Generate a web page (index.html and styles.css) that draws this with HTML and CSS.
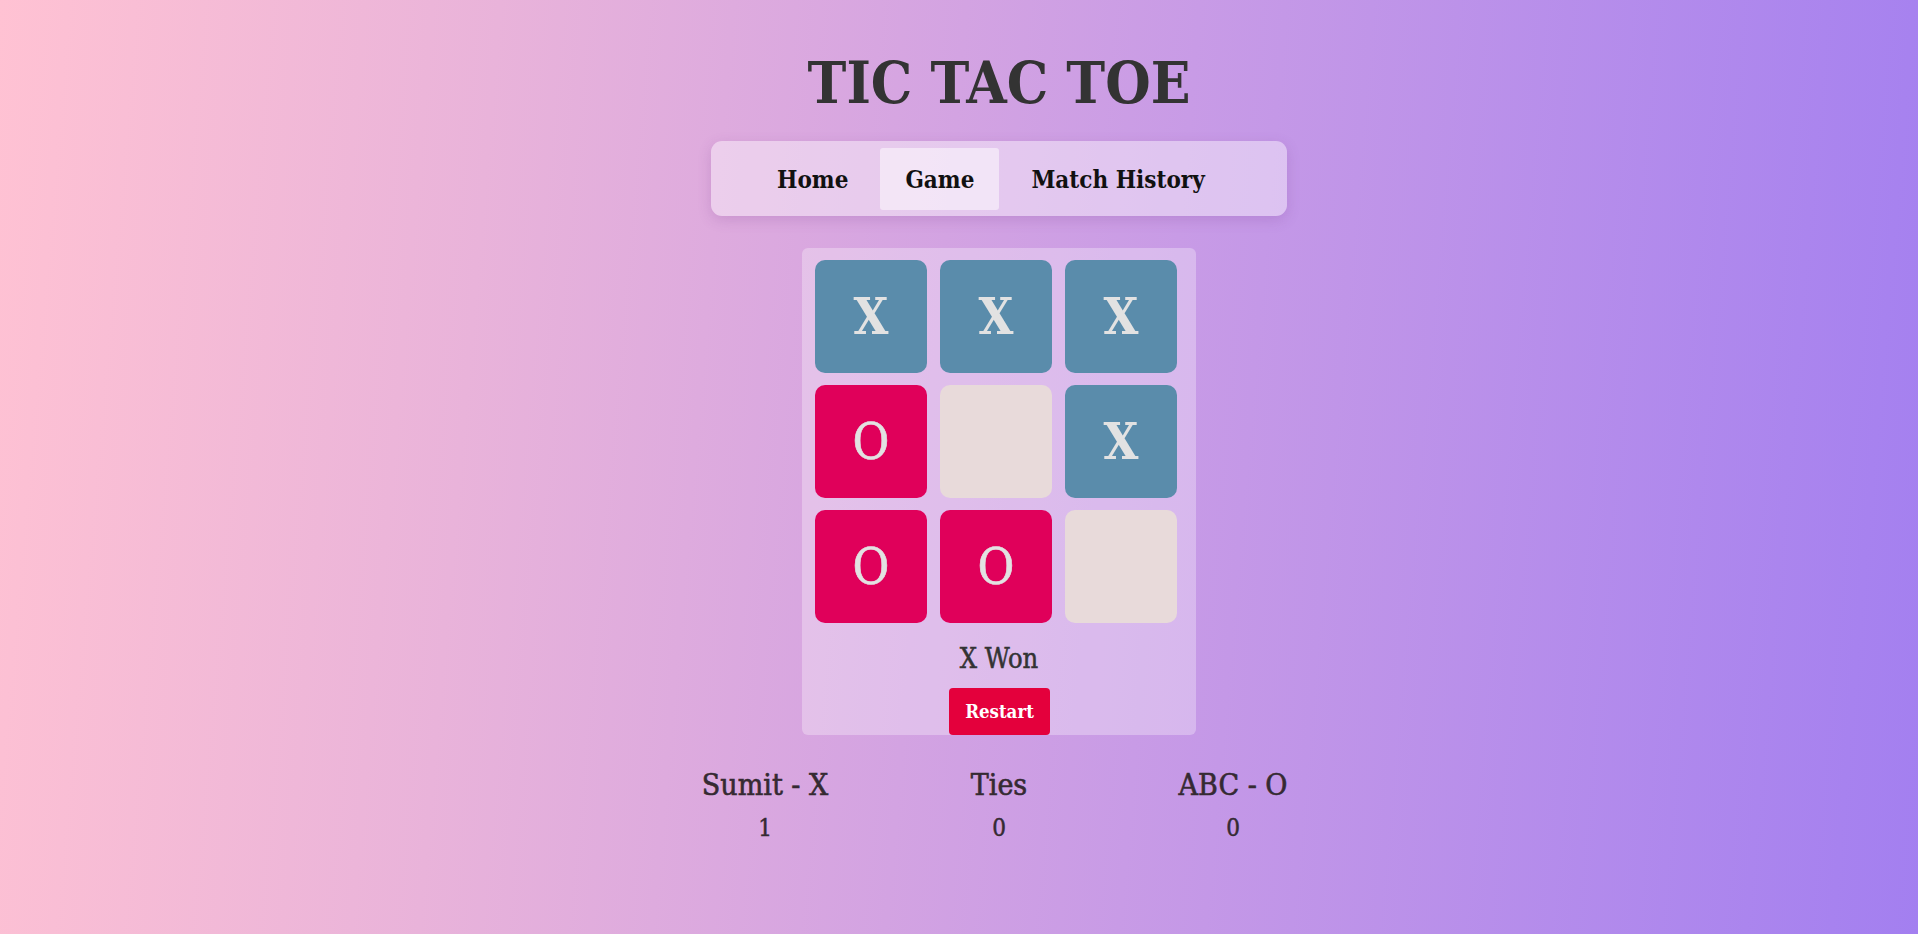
FILE: index.html
```html
<!DOCTYPE html>
<html lang="en">
<head>
<meta charset="utf-8">
<title>Tic Tac Toe</title>
<link rel="stylesheet" href="styles.css">
</head>
<body>
<div class="app">
  <h1 class="title">TIC TAC TOE</h1>
  <nav class="nav">
    <a class="nav-item">Home</a>
    <a class="nav-item active">Game</a>
    <a class="nav-item">Match History</a>
  </nav>
  <section class="board-wrap">
    <div class="board">
      <div class="cell x">X</div>
      <div class="cell x">X</div>
      <div class="cell x">X</div>
      <div class="cell o">O</div>
      <div class="cell empty"></div>
      <div class="cell x">X</div>
      <div class="cell o">O</div>
      <div class="cell o">O</div>
      <div class="cell empty"></div>
    </div>
    <div class="status">X Won</div>
    <button class="restart">Restart</button>
  </section>
  <section class="scores">
    <div class="score">
      <div class="score-name">Sumit - X</div>
      <div class="score-val">1</div>
    </div>
    <div class="score">
      <div class="score-name">Ties</div>
      <div class="score-val">0</div>
    </div>
    <div class="score">
      <div class="score-name">ABC - O</div>
      <div class="score-val">0</div>
    </div>
  </section>
</div>
</body>
</html>
```
FILE: styles.css
```css
* { box-sizing: border-box; }
html, body { margin: 0; padding: 0; height: 100%; }
body {
  background: linear-gradient(95deg, #ffc2d3 0%, #e9b3da 25%, #c89be6 60%, #a37ff0 100%);
  font-family: "DejaVu Serif Condensed", "DejaVu Serif", serif;
  color: #333;
}
.app {
  display: flex;
  flex-direction: column;
  align-items: center;
  padding-top: 47px;
  padding-left: 80px;
}
.title {
  margin: 0;
  font-size: 58px;
  font-weight: bold;
  line-height: 72px;
  color: #333;
}
.nav {
  margin-top: 22px;
  width: 576px;
  height: 75px;
  padding: 7px 0 6px 41px;
  display: flex;
  gap: 7px;
  background: rgba(255, 255, 255, 0.42);
  border-radius: 11px;
  box-shadow: 0 4px 14px rgba(120, 60, 140, 0.2);
}
.nav-item {
  display: flex;
  align-items: center;
  padding: 0 25px;
  font-size: 24px;
  font-weight: bold;
  color: #111;
  border-radius: 3px;
}
.nav-item.active { background: rgba(255, 255, 255, 0.5); }
.board-wrap {
  margin-top: 32px;
  width: 394px;
  height: 487px;
  padding: 12px 0 0 13px;
  background: rgba(255, 255, 255, 0.3);
  border-radius: 6px;
  display: flex;
  flex-direction: column;
}
.board {
  display: grid;
  grid-template-columns: repeat(3, 112px);
  grid-auto-rows: 113px;
  column-gap: 13px;
  row-gap: 12px;
}
.cell {
  border-radius: 10px;
  display: flex;
  align-items: center;
  justify-content: center;
  font-size: 50px;
  font-weight: bold;
  color: #e2e2e2;
}
.cell.x { background: #5a8cab; }
.cell.o { background: #e0005a; font-weight: normal; -webkit-text-stroke: 0.6px #e2e2e2; }
.cell.empty { background: #e8dada; }
.status {
  margin-top: 20px;
  width: 368px;
  text-align: center;
  font-size: 27px;
  line-height: 32px;
  color: #333;
  -webkit-text-stroke: 0.5px #333;
}
.restart {
  align-self: flex-start;
  margin: 13px 0 0 134px;
  width: 101px;
  height: 48px;
  border: 0;
  border-radius: 4px;
  background: #e4003c;
  color: #fff;
  font-family: inherit;
  font-size: 18.5px;
  font-weight: bold;
}
.scores {
  margin-top: 32px;
  display: grid;
  grid-template-columns: repeat(3, 234px);
}
.score { text-align: center; }
.score-name {
  font-size: 30px;
  line-height: 36px;
  color: #352a32;
  -webkit-text-stroke: 0.6px #352a32;
}
.score-val {
  margin-top: 11px;
  font-size: 24px;
  line-height: 28px;
  color: #352a32;
  -webkit-text-stroke: 0.5px #352a32;
}
```
